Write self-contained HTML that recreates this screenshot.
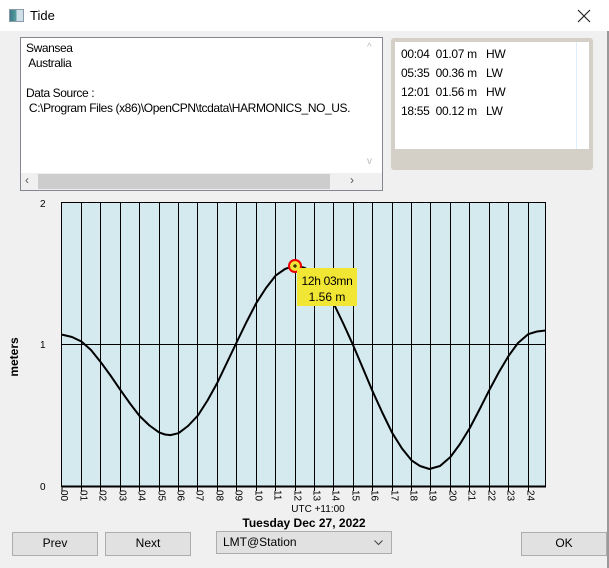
<!DOCTYPE html>
<html><head><meta charset="utf-8"><style>
*{margin:0;padding:0;box-sizing:border-box}
body{width:609px;height:568px;overflow:hidden;background:#f0f0f0;font-family:"Liberation Sans",sans-serif;font-size:12px;color:#000;position:relative}
.abs{position:absolute}
.btn{position:absolute;background:#e1e1e1;border:1px solid #adadad;text-align:center;line-height:21px;font-size:12px}
</style></head><body>
<div class="abs" style="left:0;top:0;width:609px;height:31px;background:#fff"></div>
<div class="abs" style="left:9px;top:9px;width:15px;height:13px;border:1px solid #8a9aa8;background:linear-gradient(90deg,#3a7a8a 0,#5aa0a0 50%,#d0e0e8 50%)"></div>
<div class="abs" style="left:30px;top:8px;font-size:13px">Tide</div>
<svg class="abs" style="left:577px;top:9px" width="14" height="14"><path d="M1 1L13 13M13 1L1 13" stroke="#222" stroke-width="1.2"/></svg>
<div class="abs" style="left:607px;top:31px;width:2px;height:537px;background:#999"></div>

<div class="abs" style="left:20px;top:37px;width:363px;height:154px;border:1px solid #828790;background:#fff"></div>
<div class="abs" style="left:26px;top:41px;line-height:15px;white-space:pre;font-size:12px;letter-spacing:-0.4px">Swansea
 Australia

Data Source :
 C:\Program Files (x86)\OpenCPN\tcdata\HARMONICS_NO_US.</div>
<div class="abs" style="left:364px;top:38px;width:18px;height:135px;background:#fff"></div>
<div class="abs" style="left:367px;top:42px;color:#bbb;font-size:10px">^</div>
<div class="abs" style="left:367px;top:156px;color:#bbb;font-size:10px">v</div>
<div class="abs" style="left:21px;top:173px;width:361px;height:17px;background:#f0f0f0"></div>
<div class="abs" style="left:38px;top:174px;width:292px;height:15px;background:#cdcdcd"></div>
<div class="abs" style="left:25px;top:173px;font-size:12px;color:#555">&lsaquo;</div>
<div class="abs" style="left:350px;top:173px;font-size:12px;color:#555">&rsaquo;</div>

<div class="abs" style="left:391px;top:38px;width:202px;height:132px;background:#d4d0c8;border-radius:3px"></div>
<div class="abs" style="left:395px;top:42px;width:194px;height:107px;background:#fff"></div>
<div class="abs" style="left:576px;top:42px;width:1px;height:107px;background:#ddeeff"></div>
<div class="abs" style="left:401px;top:45px;line-height:19px;white-space:pre;font-size:12px;letter-spacing:-0.3px">00:04  01.07 m   HW
05:35  00.36 m   LW
12:01  01.56 m   HW
18:55  00.12 m   LW</div>

<svg class="abs" style="left:0;top:0" width="609" height="568">
<rect x="61.5" y="202.5" width="484" height="284" fill="#d5eaef" stroke="#000"/>
<g stroke="#000" stroke-width="1">
<path d="M81.5 203V486M100.5 203V486M120.5 203V486M139.5 203V486M159.5 203V486M178.5 203V486M197.5 203V486M217.5 203V486M236.5 203V486M256.5 203V486M275.5 203V486M295.5 203V486M314.5 203V486M333.5 203V486M353.5 203V486M372.5 203V486M392.5 203V486M411.5 203V486M430.5 203V486M450.5 203V486M469.5 203V486M489.5 203V486M508.5 203V486M528.5 203V486"/>
<path d="M62 344.5H545"/>
</g>
<path d="M62 486.5H546" stroke="#000" stroke-width="2"/>
<path d="M62 487V491M81.5 487V491M100.5 487V491M120.5 487V491M139.5 487V491M159.5 487V491M178.5 487V491M197.5 487V491M217.5 487V491M236.5 487V491M256.5 487V491M275.5 487V491M295.5 487V491M314.5 487V491M333.5 487V491M353.5 487V491M372.5 487V491M392.5 487V491M411.5 487V491M430.5 487V491M450.5 487V491M469.5 487V491M489.5 487V491M508.5 487V491M528.5 487V491" stroke="#000"/>
<polyline fill="none" stroke="#000" stroke-width="2" stroke-linejoin="round" points="62,334.6 72,337 81.4,341.5 91,350 100.8,362.2 110.5,375.5 120.3,389.8 130,403.5 139.7,416.1 149.5,425.5 159.1,432.4 165,434.5 170.4,435.1 178.5,433.2 188,426 197.9,415.5 207.5,400.5 217.4,382.6 227,362.5 236.8,342 246.5,322 256.2,303.2 266,288 275.6,275.6 285,269 295.4,265.3 305,268 314.5,275.3 324,287.5 333.9,304 343.5,324 353.3,345.6 363,368.5 372.7,391.6 382.5,413 392.1,432.7 402,448.5 411.6,460.4 420,466 429.4,469 440,466 450.4,457 460,444 469.8,428 479.5,409.5 489.2,390.3 499,372 508.7,355.7 518,343 528.1,334.2 537,331.5 545.5,330.5"/>
<circle cx="295" cy="266" r="6" fill="#f2e634" stroke="#e00" stroke-width="2"/>
<path d="M293 266H297M295 264V268" stroke="#000"/>
<rect x="297" y="268" width="60" height="38" fill="#f2e634"/>
<text x="327" y="285" font-size="12" text-anchor="middle" font-family="Liberation Sans" letter-spacing="-0.3">12h 03mn</text>
<text x="327" y="301" font-size="12" text-anchor="middle" font-family="Liberation Sans">1.56 m</text>
<g font-size="10" font-family="Liberation Sans">
<text x="40" y="207">2</text><text x="40" y="348">1</text><text x="40" y="490">0</text>
</g>
<text transform="translate(18,357) rotate(-90)" font-size="12" font-weight="bold" text-anchor="middle" font-family="Liberation Sans">meters</text>
<g font-size="10" font-family="Liberation Sans">
<text transform="translate(61,490) rotate(90)">00</text><text transform="translate(80.5,490) rotate(90)">01</text><text transform="translate(99.5,490) rotate(90)">02</text><text transform="translate(119.5,490) rotate(90)">03</text><text transform="translate(138.5,490) rotate(90)">04</text><text transform="translate(158.5,490) rotate(90)">05</text><text transform="translate(177.5,490) rotate(90)">06</text><text transform="translate(196.5,490) rotate(90)">07</text><text transform="translate(216.5,490) rotate(90)">08</text><text transform="translate(235.5,490) rotate(90)">09</text><text transform="translate(255.5,490) rotate(90)">10</text><text transform="translate(274.5,490) rotate(90)">11</text><text transform="translate(294.5,490) rotate(90)">12</text><text transform="translate(313.5,490) rotate(90)">13</text><text transform="translate(332.5,490) rotate(90)">14</text><text transform="translate(352.5,490) rotate(90)">15</text><text transform="translate(371.5,490) rotate(90)">16</text><text transform="translate(391.5,490) rotate(90)">17</text><text transform="translate(410.5,490) rotate(90)">18</text><text transform="translate(429.5,490) rotate(90)">19</text><text transform="translate(449.5,490) rotate(90)">20</text><text transform="translate(468.5,490) rotate(90)">21</text><text transform="translate(488.5,490) rotate(90)">22</text><text transform="translate(507.5,490) rotate(90)">23</text><text transform="translate(527.5,490) rotate(90)">24</text>
</g>
<text x="318" y="512" font-size="10" text-anchor="middle" font-family="Liberation Sans">UTC +11:00</text>
<text x="304" y="527" font-size="12" font-weight="bold" text-anchor="middle" font-family="Liberation Sans">Tuesday Dec 27, 2022</text>
</svg>

<div class="btn" style="left:12px;top:532px;width:86px;height:24px">Prev</div>
<div class="btn" style="left:105px;top:532px;width:86px;height:24px">Next</div>
<div class="btn" style="left:216px;top:531px;width:176px;height:23px;text-align:left;padding-left:6px">LMT@Station<svg style="position:absolute;right:8px;top:8px" width="9" height="6"><path d="M0.5 0.5L4.5 4.5L8.5 0.5" fill="none" stroke="#444"/></svg></div>
<div class="btn" style="left:521px;top:532px;width:86px;height:24px">OK</div>
</body></html>
